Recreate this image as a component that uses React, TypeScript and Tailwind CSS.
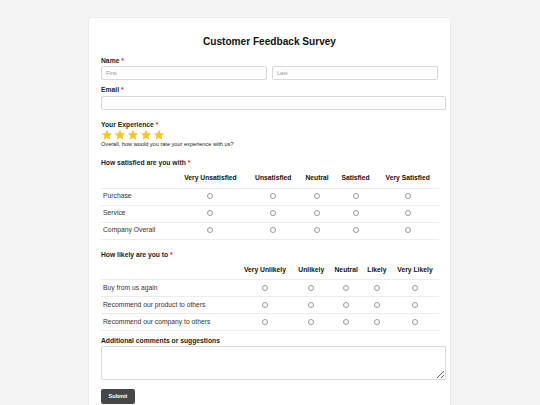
import React from "react";

const Star = () => (
  <svg width="12" height="12" viewBox="0 0 24 24">
    <path
      d="M12 1.5l3.1 6.9 7.4.7-5.6 5 1.7 7.4L12 17.6l-6.6 3.9 1.7-7.4-5.6-5 7.4-.7z"
      fill="#f5c430"
    />
  </svg>
);

const Radio = () => (
  <span className="inline-block w-[6px] h-[6px] rounded-full border border-[#9a9a9a] bg-white align-middle" />
);

function Matrix({ cols, rows }: { cols: string[]; rows: string[] }) {
  return (
    <table className="w-[338px] border-collapse mt-[2px] text-[6.75px] text-[#222]">
      <thead>
        <tr className="h-[19px] border-b border-[#ececec]">
          <th />
          {cols.map((c) => (
            <th key={c} className="font-bold text-center whitespace-nowrap px-[2px] text-[#111]">
              {c}
            </th>
          ))}
        </tr>
      </thead>
      <tbody>
        {rows.map((r) => (
          <tr key={r} className="h-[17px] border-b border-[#ececec]">
            <td className="pl-[2px] pr-[2px] whitespace-nowrap text-[#333]">{r}</td>
            {cols.map((c) => (
              <td key={c} className="text-center px-[2px] leading-none">
                <Radio />
              </td>
            ))}
          </tr>
        ))}
      </tbody>
    </table>
  );
}

const Label = ({ children, req = true, className = "" }: { children: React.ReactNode; req?: boolean; className?: string }) => (
  <div className={"h-[9px] leading-[9px] text-[6.75px] font-bold text-[#222] " + className}>
    {children}
    {req && <span className="text-[#e02424]"> *</span>}
  </div>
);

export default function App() {
  return (
    <div
      className="w-[540px] h-[405px] overflow-hidden bg-[#f4f4f4] pt-[17px]"
      style={{ fontFamily: '"Liberation Sans", Arial, sans-serif' }}
    >
      <div className="ml-[88px] w-[363px] h-[400px] bg-white rounded-[3px] border border-[#ebebeb] pl-[12px] pr-[12px] pt-[18px]">
        <div className="h-[12px] leading-[12px] text-center text-[10.1px] font-bold text-[#111]">
          Customer Feedback Survey
        </div>

        <Label className="mt-[8px]">Name</Label>
        <div className="mt-[1px] flex gap-[5px]">
          <div className="w-[166px] h-[14px] border border-[#d9d9d9] rounded-[2px] flex items-center pl-[4px] text-[5.6px] text-[#999]">
            First
          </div>
          <div className="w-[166px] h-[14px] border border-[#d9d9d9] rounded-[2px] flex items-center pl-[4px] text-[5.6px] text-[#999]">
            Last
          </div>
        </div>

        <Label className="mt-[5px]">Email</Label>
        <div className="mt-[2px] w-[345px] h-[14px] border border-[#d9d9d9] rounded-[2px]" />

        <Label className="mt-[10px]">Your Experience</Label>
        <div className="flex h-[12px] gap-[1px]">
          <Star />
          <Star />
          <Star />
          <Star />
          <Star />
        </div>
        <div className="h-[7px] leading-[7px] text-[5.6px] text-[#222]">
          Overall, how would you rate your experience with us?
        </div>

        <Label className="mt-[10px]">How satisfied are you with</Label>
        <Matrix
          cols={["Very Unsatisfied", "Unsatisfied", "Neutral", "Satisfied", "Very Satisfied"]}
          rows={["Purchase", "Service", "Company Overall"]}
        />

        <Label className="mt-[10px]">How likely are you to</Label>
        <Matrix
          cols={["Very Unlikely", "Unlikely", "Neutral", "Likely", "Very Likely"]}
          rows={["Buy from us again", "Recommend our product to others", "Recommend our company to others"]}
        />

        <Label className="mt-[5px]" req={false}>
          Additional comments or suggestions
        </Label>
        <textarea className="block mt-[1px] w-[345px] h-[34px] border border-[#d9d9d9] rounded-[2px] resize-y" />

        <button className="mt-[9px] w-[34px] h-[15px] bg-[#474747] rounded-[2px] text-white text-[5.6px] font-bold flex items-center justify-center">
          Submit
        </button>
      </div>
    </div>
  );
}
